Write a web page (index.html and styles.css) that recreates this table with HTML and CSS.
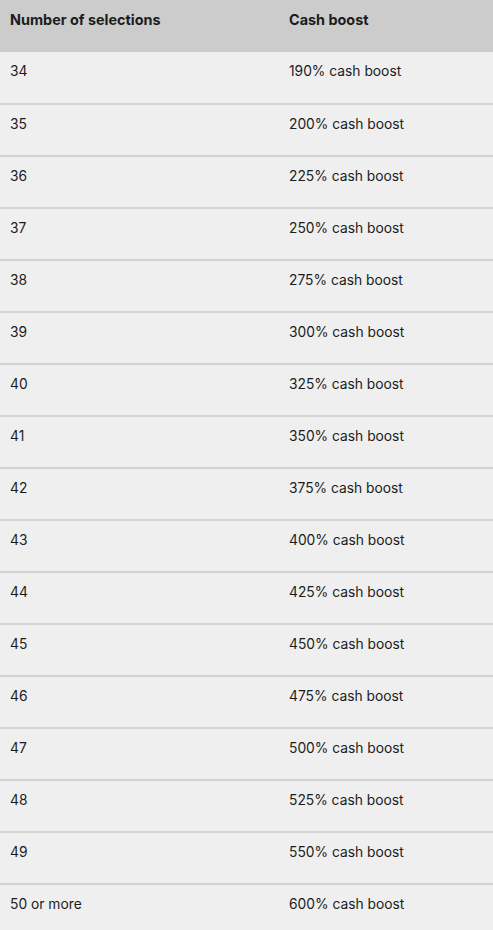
FILE: index.html
```html
<!DOCTYPE html>
<html>
<head>
<meta charset="utf-8">
<link rel="stylesheet" href="styles.css">
</head>
<body>
<table class="boost-table">
  <thead>
    <tr><th>Number of selections</th><th>Cash boost</th></tr>
  </thead>
  <tbody>
    <tr><td>34</td><td>190% cash boost</td></tr>
    <tr><td>35</td><td>200% cash boost</td></tr>
    <tr><td>36</td><td>225% cash boost</td></tr>
    <tr><td>37</td><td>250% cash boost</td></tr>
    <tr><td>38</td><td>275% cash boost</td></tr>
    <tr><td>39</td><td>300% cash boost</td></tr>
    <tr><td>40</td><td>325% cash boost</td></tr>
    <tr><td>41</td><td>350% cash boost</td></tr>
    <tr><td>42</td><td>375% cash boost</td></tr>
    <tr><td>43</td><td>400% cash boost</td></tr>
    <tr><td>44</td><td>425% cash boost</td></tr>
    <tr><td>45</td><td>450% cash boost</td></tr>
    <tr><td>46</td><td>475% cash boost</td></tr>
    <tr><td>47</td><td>500% cash boost</td></tr>
    <tr><td>48</td><td>525% cash boost</td></tr>
    <tr><td>49</td><td>550% cash boost</td></tr>
    <tr><td>50 or more</td><td>600% cash boost</td></tr>
  </tbody>
</table>
</body>
</html>
```
FILE: styles.css
```css
html, body {
  margin: 0;
  padding: 0;
  background: #efefef;
}
body {
  font-family: "Inter", "Liberation Sans", sans-serif;
  font-size: 13.8px;
  color: #1c1c1c;
}
.boost-table {
  width: 493px;
  border-collapse: collapse;
  table-layout: fixed;
}
.boost-table th,
.boost-table td {
  text-align: left;
  vertical-align: top;
  padding: 11px 0 0 10px;
  box-sizing: border-box;
}
.boost-table th:first-child,
.boost-table td:first-child {
  width: 279px;
}
.boost-table thead tr {
  background: #cccccc;
  height: 52px;
}
.boost-table th {
  font-weight: 700;
  font-size: 14.4px;
}
.boost-table tbody tr {
  height: 52px;
  background: #efefef;
}
.boost-table tbody tr + tr {
  border-top: 2px solid #d2d2d2;
}
```
